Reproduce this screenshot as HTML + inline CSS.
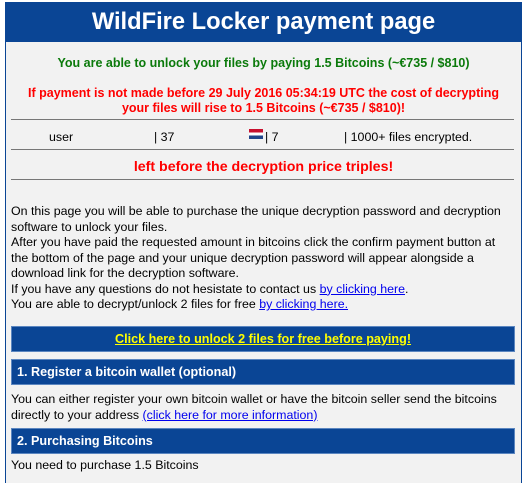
<!DOCTYPE html>
<html><head><style>
body{margin:0;background:#fff;font-family:"Liberation Sans",Arial,sans-serif;}
#w{position:absolute;left:5px;top:2px;width:515px;height:480px;border:1px solid #0a4595;border-bottom:none;background:#f2f2f2;overflow:hidden}
.a{position:absolute;white-space:nowrap}
.hd{position:absolute;left:0;top:0;width:515px;height:39px;background:#0a4595;color:#fff;font-weight:bold;font-size:23.7px;text-align:center;line-height:39px}
.c{left:0;width:515px;text-align:center;font-weight:bold;font-size:12.5px}
.hr{position:absolute;left:5px;width:503px;height:1px;background:#777}
.bb{position:absolute;left:5px;width:502px;height:24px;background:#0a4595;color:#fff;font-weight:bold;font-size:12.6px;line-height:24px;border:1px solid #5b86c0}
.t{position:absolute;left:5px;font-size:12.4px;line-height:15.5px;color:#000;white-space:nowrap}
a{color:#0000ee}
</style></head><body><div id="w">
<div class="hd">WildFire Locker payment page</div>
<div class="a c" style="top:53px;color:#0b7a0b">You are able to unlock your files by paying 1.5 Bitcoins (~€735 / $810)</div>
<div class="a c" style="top:83px;color:#f00;line-height:15px">If payment is not made before 29 July 2016 05:34:19 UTC the cost of decrypting<br>your files will rise to 1.5 Bitcoins (~€735 / $810)!</div>
<div class="hr" style="top:116px"></div>
<div class="a" style="top:127px;left:43px;font-size:12.4px">user</div>
<div class="a" style="top:127px;left:148px;font-size:12.4px">| 37</div>
<div class="a" style="top:126px;left:243px;width:14px;height:10px;background:linear-gradient(#c8102e 33%,#fff 33% 66%,#21468b 66%)"></div>
<div class="a" style="top:127px;left:259px;font-size:12.4px">| 7</div>
<div class="a" style="top:127px;left:338px;font-size:12.4px">| 1000+ files encrypted.</div>
<div class="hr" style="top:146px"></div>
<div class="a c" style="top:156px;color:#f00;font-size:14.2px">left before the decryption price triples!</div>
<div class="hr" style="top:176px"></div>
<div class="t" style="top:201px">On this page you will be able to purchase the unique decryption password and decryption<br>software to unlock your files.<br>After you have paid the requested amount in bitcoins click the confirm payment button at<br>the bottom of the page and your unique decryption password will appear alongside a<br>download link for the decryption software.<br>If you have any questions do not hesistate to contact us <a href="#">by clicking here</a>.<br>You are able to decrypt/unlock 2 files for free <a href="#">by clicking here.</a></div>
<div class="bb" style="top:323px;text-align:center"><span style="color:#ff0;text-decoration:underline">Click here to unlock 2 files for free before paying!</span></div>
<div class="bb" style="top:356px"><span style="margin-left:5px">1. Register a bitcoin wallet (optional)</span></div>
<div class="t" style="top:389px">You can either register your own bitcoin wallet or have the bitcoin seller send the bitcoins<br>directly to your address <a href="#">(click here for more information)</a></div>
<div class="bb" style="top:425px"><span style="margin-left:5px">2. Purchasing Bitcoins</span></div>
<div class="t" style="top:455px">You need to purchase 1.5 Bitcoins</div>
</div></body></html>
